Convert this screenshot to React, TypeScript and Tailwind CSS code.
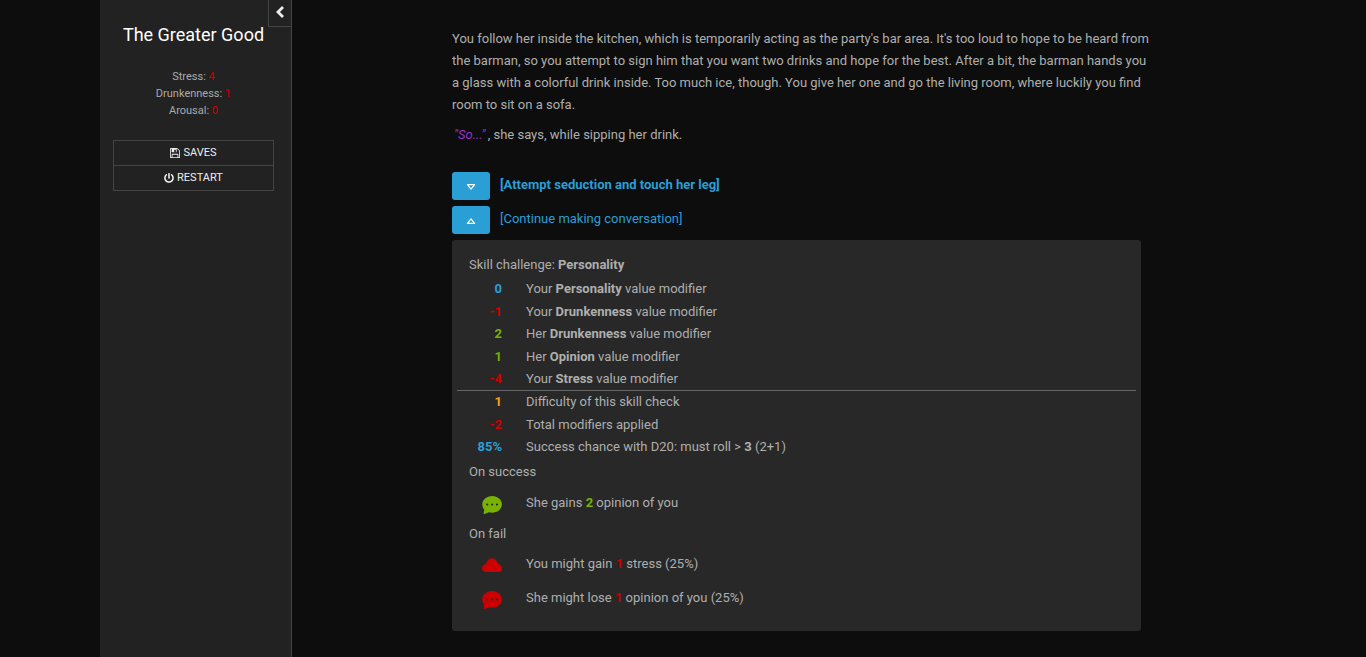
import React from 'react';
import { FaPowerOff } from 'react-icons/fa';

interface Stat {
  label: string;
  value: number;
}

interface Modifier {
  value: string;
  color: string;
  text: React.ReactNode;
}

const stats: Stat[] = [
  { label: 'Stress', value: 4 },
  { label: 'Drunkenness', value: 1 },
  { label: 'Arousal', value: 0 },
];

const modifiers: Modifier[] = [
  { value: '0', color: 'text-[#2a9fd6]', text: <>Your <b>Personality</b> value modifier</> },
  { value: '-1', color: 'text-[#cc0000]', text: <>Your <b>Drunkenness</b> value modifier</> },
  { value: '2', color: 'text-[#77b300]', text: <>Her <b>Drunkenness</b> value modifier</> },
  { value: '1', color: 'text-[#77b300]', text: <>Her <b>Opinion</b> value modifier</> },
  { value: '-4', color: 'text-[#cc0000]', text: <>Your <b>Stress</b> value modifier</> },
];

const totals: Modifier[] = [
  { value: '1', color: 'text-[#ff9f1a]', text: 'Difficulty of this skill check' },
  { value: '-2', color: 'text-[#cc0000]', text: 'Total modifiers applied' },
  { value: '85%', color: 'text-[#2a9fd6]', text: <>Success chance with D20: must roll &gt; <b>3</b> (2+1)</> },
];

const SaveIcon = () => (
  <svg viewBox="0 128 1536 1536" className="size-2.5" fill="currentColor" aria-hidden="true">
    <path d="M384 1536h768v-384h-768v384zM1280 1536h128v-896q0-14-10-38.5t-20-34.5l-281-281q-10-10-34-20t-39-10v416q0 40-28 68t-68 28h-576q-40 0-68-28t-28-68v-416h-128v1280h128v-416q0-40 28-68t68-28h832q40 0 68 28t28 68v416zM896 736v-320q0-13-9.5-22.5t-22.5-9.5h-192q-13 0-22.5 9.5t-9.5 22.5v320q0 13 9.5 22.5t22.5 9.5h192q13 0 22.5-9.5t9.5-22.5zM1536 640v928q0 40-28 68t-68 28h-1344q-40 0-68-28t-28-68v-1344q0-40 28-68t68-28h928q40 0 88 20t76 48l280 280q28 28 48 76t20 88z" />
  </svg>
);

const ChevronIcon = () => (
  <svg viewBox="0 0 10 12" className="mb-0.5 h-3 w-2.5" fill="none" stroke="currentColor" strokeWidth="2.8" aria-hidden="true">
    <path d="M8 1 3 6l5 5" />
  </svg>
);

const ChatIcon: React.FC<{ className: string }> = ({ className }) => (
  <svg viewBox="0 0 20 18" className={`h-[18px] w-5 ${className}`} fill="currentColor" aria-hidden="true">
    <path
      fillRule="evenodd"
      d="M10.2 0C4.7 0 .3 3.7.3 8.3c0 2.1.7 3.9 2 5.3L1.6 17.2c-.1.6.3.9.8.7l4.4-1.7c1.1.3 2.2.5 3.4.5 5.4 0 9.7-3.7 9.7-8.4S15.6 0 10.2 0ZM5.2 7.4a1.1 1.1 0 1 1 0 2.2 1.1 1.1 0 0 1 0-2.2Zm4.9 0a1.1 1.1 0 1 1 0 2.2 1.1 1.1 0 0 1 0-2.2Zm4.9 0a1.1 1.1 0 1 1 0 2.2 1.1 1.1 0 0 1 0-2.2Z"
    />
  </svg>
);

const CloudIcon: React.FC<{ className: string }> = ({ className }) => (
  <svg viewBox="0 0 20 18" className={`h-[18px] w-5 ${className}`} fill="currentColor" aria-hidden="true">
    <path d="M4 15C1.700 15 0 13.500 0 11.300c0-1.800 1-3.100 2.600-3.800C4 6.800 4.500 5.700 5.500 4 6.500 2.200 8 1.300 10 1.300s3.500.9 4.500 2.700c1 1.700 1.500 2.800 2.900 3.500 1.600.7 2.600 2 2.600 3.800 0 2.200-1.700 3.700-4 3.700Z" />
  </svg>
);

const ModifierRows: React.FC<{ rows: Modifier[] }> = ({ rows }) => (
  <>
    {rows.map((row, index) => (
      <tr key={index} className="even:h-[23px]">
        <th scope="row" className={`w-[45px] p-0 text-right font-bold ${row.color}`}>{row.value}</th>
        <td className="p-0 pl-6">{row.text}</td>
      </tr>
    ))}
  </>
);

const Choice: React.FC<{ open: boolean; children: React.ReactNode }> = ({ open, children }) => (
  <div className="flex gap-2.5">
    <button
      type="button"
      aria-expanded={open}
      aria-label={open ? 'Hide details' : 'Show details'}
      className="flex h-7 w-[38px] items-center justify-center rounded-[3px] bg-[#2a9fd6] text-white"
    >
      <svg viewBox="0 0 10 8" className={`mt-0.5 h-2 w-2.5 ${open ? '' : 'rotate-180'}`} fill="none" stroke="currentColor" strokeWidth="1.2" strokeLinejoin="round" aria-hidden="true">
        <path d="M5 1.8 8.6 6.4H1.4Z" />
      </svg>
    </button>
    <a href="#" className={`leading-[26px] text-[#2a9fd6] hover:underline ${open ? '' : 'font-bold'}`}>
      {children}
    </a>
  </div>
);

const Outcome: React.FC<{ icon: React.ReactNode; children: React.ReactNode }> = ({ icon, children }) => (
  <div className="flex h-[34px] items-center">
    <div className="flex w-[45px] justify-end pt-1">{icon}</div>
    <p className="pl-6">{children}</p>
  </div>
);

const Sidebar = () => (
  <aside className="relative w-48 shrink-0 border-r border-[#444] bg-[#222] text-center">
    <button
      type="button"
      aria-label="Toggle the sidebar"
      className="absolute top-0 right-0 flex h-[27px] w-[23px] items-center justify-center border-b border-l border-[#444] text-[#eee]"
    >
      <ChevronIcon />
    </button>
    <div className="pt-[23px] pr-[17px] pl-[13px]">
      <h1 className="text-lg leading-6 text-white">The Greater Good</h1>
      <div className="mt-[21px] text-[11px] leading-[17px] text-[#aaa]">
        {stats.map((stat) => (
          <p key={stat.label}>
            {stat.label}: <span className="text-[#cc0000]">{stat.value}</span>
          </p>
        ))}
      </div>
      <nav className="mt-[21px] divide-y divide-[#444] border border-[#444] text-[11px] text-[#eee]">
        <button type="button" className="box-content flex h-6 w-full items-center justify-center gap-[3px]">
          <SaveIcon /> SAVES
        </button>
        <button type="button" className="box-content flex h-6 w-full items-center justify-center gap-[3px]">
          <FaPowerOff className="size-2.5" /> RESTART
        </button>
      </nav>
    </div>
  </aside>
);

const App = () => {
  return (
    <div className="flex min-h-screen bg-[#0d0d0d] pl-[100px] font-[Roboto,'Liberation_Sans',sans-serif] text-[13px] leading-[22px] text-[#adafae]">
      <Sidebar />
      <main className="min-w-0 flex-1 pt-7 pr-8 pb-6 pl-40">
        <div className="max-w-[689px]">
          <p className="-mr-3">
            You follow her inside the kitchen, which is temporarily acting as the party's bar area. It's too loud to hope to be heard from the barman, so you attempt to sign him that you want two drinks and hope for the best. After a bit, the barman hands you a glass with a colorful drink inside. Too much ice, though. You give her one and go the living room, where luckily you find room to sit on a sofa.
          </p>
          <p className="mt-2">
            <em className="px-0.5 text-[#9933cc]">"So..."</em>, she says, while sipping her drink.
          </p>

          <div className="mt-[26px] flex flex-col gap-1.5">
            <Choice open={false}>[Attempt seduction and touch her leg]</Choice>
            <Choice open>[Continue making conversation]</Choice>
          </div>

          <section className="mt-1.5 rounded-[3px] bg-[#282828] px-[5px] pt-3.5 pb-4">
            <h2 className="pl-3">Skill challenge: <b>Personality</b></h2>
            <table className="mt-0.5 w-full border-collapse">
              <tbody className="border-b border-[#666]">
                <ModifierRows rows={modifiers} />
              </tbody>
              <tbody>
                <ModifierRows rows={totals} />
              </tbody>
            </table>
            <h3 className="mt-[3px] mb-[3px] pl-3">On success</h3>
            <Outcome icon={<ChatIcon className="text-[#77b300]" />}>
              She gains <b className="text-[#77b300]">2</b> opinion of you
            </Outcome>
            <h3 className="mt-[3px] mb-0.5 pl-3">On fail</h3>
            <Outcome icon={<CloudIcon className="text-[#cc0000]" />}>
              You might gain <b className="text-[#cc0000]">1</b> stress (25%)
            </Outcome>
            <Outcome icon={<ChatIcon className="text-[#cc0000]" />}>
              She might lose <b className="text-[#cc0000]">1</b> opinion of you (25%)
            </Outcome>
          </section>
        </div>
      </main>
    </div>
  );
};

export default App;
